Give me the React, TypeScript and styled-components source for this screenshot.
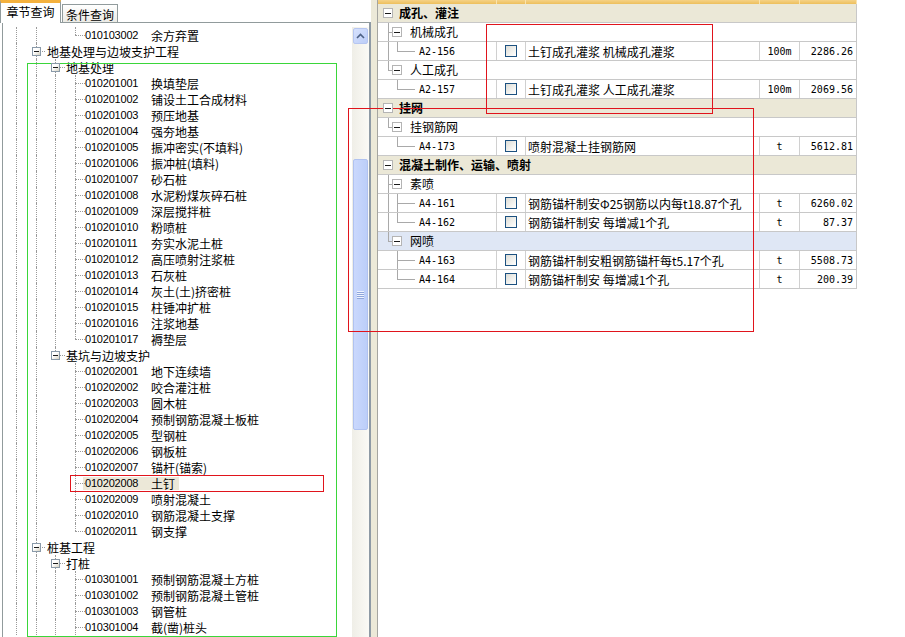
import React from 'react';
import styled, { createGlobalStyle } from 'styled-components';

const GlobalStyle = createGlobalStyle`
  html, body {
    margin: 0;
    padding: 0;
    background: #ffffff;
  }
  body {
    font-family: "Noto Sans CJK SC", "Liberation Sans", sans-serif;
    font-size: 12px;
    color: #000;
    overflow: hidden;
  }
`;

type TreeItem = { depth: number; name: string; code?: string; selected?: boolean };

const leftRows: TreeItem[] = [
  { depth: 3, code: '010103002', name: '余方弃置' },
  { depth: 1, name: '地基处理与边坡支护工程' },
  { depth: 2, name: '地基处理' },
  { depth: 3, code: '010201001', name: '换填垫层' },
  { depth: 3, code: '010201002', name: '铺设土工合成材料' },
  { depth: 3, code: '010201003', name: '预压地基' },
  { depth: 3, code: '010201004', name: '强夯地基' },
  { depth: 3, code: '010201005', name: '振冲密实(不填料)' },
  { depth: 3, code: '010201006', name: '振冲桩(填料)' },
  { depth: 3, code: '010201007', name: '砂石桩' },
  { depth: 3, code: '010201008', name: '水泥粉煤灰碎石桩' },
  { depth: 3, code: '010201009', name: '深层搅拌桩' },
  { depth: 3, code: '010201010', name: '粉喷桩' },
  { depth: 3, code: '010201011', name: '夯实水泥土桩' },
  { depth: 3, code: '010201012', name: '高压喷射注浆桩' },
  { depth: 3, code: '010201013', name: '石灰桩' },
  { depth: 3, code: '010201014', name: '灰土(土)挤密桩' },
  { depth: 3, code: '010201015', name: '柱锤冲扩桩' },
  { depth: 3, code: '010201016', name: '注浆地基' },
  { depth: 3, code: '010201017', name: '褥垫层' },
  { depth: 2, name: '基坑与边坡支护' },
  { depth: 3, code: '010202001', name: '地下连续墙' },
  { depth: 3, code: '010202002', name: '咬合灌注桩' },
  { depth: 3, code: '010202003', name: '圆木桩' },
  { depth: 3, code: '010202004', name: '预制钢筋混凝土板桩' },
  { depth: 3, code: '010202005', name: '型钢桩' },
  { depth: 3, code: '010202006', name: '钢板桩' },
  { depth: 3, code: '010202007', name: '锚杆(锚索)' },
  { depth: 3, code: '010202008', name: '土钉', selected: true },
  { depth: 3, code: '010202009', name: '喷射混凝土' },
  { depth: 3, code: '010202010', name: '钢筋混凝土支撑' },
  { depth: 3, code: '010202011', name: '钢支撑' },
  { depth: 1, name: '桩基工程' },
  { depth: 2, name: '打桩' },
  { depth: 3, code: '010301001', name: '预制钢筋混凝土方桩' },
  { depth: 3, code: '010301002', name: '预制钢筋混凝土管桩' },
  { depth: 3, code: '010301003', name: '钢管桩' },
  { depth: 3, code: '010301004', name: '截(凿)桩头' },
];

type GridRow =
  | { kind: 'group'; label: string }
  | { kind: 'sub'; label: string; more: boolean; selected?: boolean }
  | { kind: 'item'; code: string; desc: string; unit: string; price: string; subMore: boolean; more: boolean };

const gridRows: GridRow[] = [
  { kind: 'group', label: '成孔、灌注' },
  { kind: 'sub', label: '机械成孔', more: true },
  { kind: 'item', code: 'A2-156', desc: '土钉成孔灌浆 机械成孔灌浆', unit: '100m', price: '2286.26', subMore: true, more: false },
  { kind: 'sub', label: '人工成孔', more: false },
  { kind: 'item', code: 'A2-157', desc: '土钉成孔灌浆 人工成孔灌浆', unit: '100m', price: '2069.56', subMore: false, more: false },
  { kind: 'group', label: '挂网' },
  { kind: 'sub', label: '挂钢筋网', more: false },
  { kind: 'item', code: 'A4-173', desc: '喷射混凝土挂钢筋网', unit: 't', price: '5612.81', subMore: false, more: false },
  { kind: 'group', label: '混凝土制作、运输、喷射' },
  { kind: 'sub', label: '素喷', more: true },
  { kind: 'item', code: 'A4-161', desc: '钢筋锚杆制安Φ25钢筋以内每t18.87个孔', unit: 't', price: '6260.02', subMore: true, more: true },
  { kind: 'item', code: 'A4-162', desc: '钢筋锚杆制安 每增减1个孔', unit: 't', price: '87.37', subMore: true, more: false },
  { kind: 'sub', label: '网喷', more: false, selected: true },
  { kind: 'item', code: 'A4-163', desc: '钢筋锚杆制安粗钢筋锚杆每t5.17个孔', unit: 't', price: '5508.73', subMore: false, more: true },
  { kind: 'item', code: 'A4-164', desc: '钢筋锚杆制安 每增减1个孔', unit: 't', price: '200.39', subMore: false, more: false },
];

// indent columns of the left tree (x 6 / 26 / 45 / 65)
const indentWidths = [20, 19, 20, 20];
const COLS = { tree: 119, check: 29, desc: 234, unit: 40, price: 57 };

function hasNext(rows: { depth: number }[], i: number, k: number) {
  for (let j = i + 1; j < rows.length; j++) {
    if (rows[j].depth < k) return false;
    if (rows[j].depth === k) return true;
  }
  return true;
}

const Page = styled.div`
  position: relative;
  display: flex;
  width: 905px;
  height: 637px;
  overflow: hidden;
  background: #fff;
`;

/* ---------- left: tab control with tree ---------- */

const LeftPanel = styled.div`
  width: 371px;
  flex-shrink: 0;
  display: flex;
  flex-direction: column;
`;

const TabStrip = styled.div`
  height: 22px;
  display: flex;
  align-items: flex-end;
  position: relative;
  z-index: 1;
`;

const Tab = styled.div<{ $active?: boolean }>`
  box-sizing: border-box;
  display: flex;
  align-items: center;
  justify-content: center;
  white-space: nowrap;
  border: 1px solid #919b9c;
  border-bottom: none;
  ${(p) =>
    p.$active
      ? `
    width: 61px;
    height: 23px;
    margin-bottom: -1px;
    border-top: 3px solid #f4b13e;
    background: #fff;
    padding-bottom: 3px;
  `
      : `
    width: 56px;
    height: 18px;
    margin-left: 1px;
    background: linear-gradient(#ffffff, #ecebe5);
    padding-top: 1px;
  `}
`;

const TabBody = styled.div`
  flex: 1;
  margin-left: 2px;
  width: 369px;
  box-sizing: border-box;
  border: 1px solid #919b9c;
  border-right: 2px solid #8e9aa5;
  border-bottom: none;
  padding-top: 4px;
  display: flex;
  background: #fff;
  min-height: 0;
`;

const Tree = styled.div`
  flex: 1;
  padding-left: 3px;
  overflow: hidden;
`;

const TreeLine = styled.div`
  height: 16px;
  display: flex;
  align-items: center;
  white-space: nowrap;
`;

const Branch = styled.div<{ $w: number; $x: number; $up?: boolean; $down?: boolean; $across?: boolean; $dotted?: boolean }>`
  position: relative;
  flex-shrink: 0;
  width: ${(p) => p.$w}px;
  align-self: stretch;
  display: flex;
  align-items: center;
  &::before {
    content: '';
    display: ${(p) => (p.$up || p.$down ? 'block' : 'none')};
    position: absolute;
    left: ${(p) => p.$x}px;
    top: ${(p) => (p.$up ? '0' : '50%')};
    bottom: ${(p) => (p.$down ? '0' : '50%')};
    border-left: 1px ${(p) => (p.$dotted ? 'dotted #9a9a9a' : 'solid #a9a9a9')};
  }
  &::after {
    content: '';
    display: ${(p) => (p.$across ? 'block' : 'none')};
    position: absolute;
    left: ${(p) => p.$x}px;
    right: 0;
    top: 50%;
    border-top: 1px ${(p) => (p.$dotted ? 'dotted #9a9a9a' : 'solid #a9a9a9')};
  }
`;

const Expander = styled.span<{ $offset: number; $size: number; $flat?: boolean }>`
  position: relative;
  z-index: 1;
  box-sizing: border-box;
  margin-left: ${(p) => p.$offset}px;
  width: ${(p) => p.$size}px;
  height: ${(p) => p.$size}px;
  border: 1px solid ${(p) => (p.$flat ? '#b4b4b4' : '#8a9aa9')};
  background: ${(p) => (p.$flat ? '#fff' : 'linear-gradient(135deg, #ffffff 40%, #d6d2c2)')};
  display: flex;
  align-items: center;
  justify-content: center;
  flex-shrink: 0;
  &::before {
    content: '';
    width: ${(p) => (p.$flat ? 6 : 5)}px;
    height: 1px;
    background: #1a1a1a;
  }
`;

const NodeLabel = styled.span<{ $indent: number; $selected?: boolean }>`
  display: flex;
  align-items: center;
  height: 13px;
  line-height: 13px;
  margin-left: ${(p) => p.$indent}px;
  padding: 0 4px 0 2px;
  background: ${(p) => (p.$selected ? '#ece8d8' : 'transparent')};
`;

const NodeCode = styled.span`
  width: 66px;
  font-family: "Liberation Sans", Arial, sans-serif;
  font-size: 11px;
  letter-spacing: -0.2px;
`;

const ScrollBar = styled.div`
  width: 17px;
  flex-shrink: 0;
  display: flex;
  flex-direction: column;
  align-items: center;
  background: linear-gradient(to right, #efeee7, #fbfaf6);
`;

const ArrowButton = styled.div`
  box-sizing: border-box;
  margin-top: 1px;
  width: 15px;
  height: 16px;
  border: 1px solid #b6c6f1;
  border-radius: 2px;
  background: linear-gradient(135deg, #d7e2fd, #bccdf8);
  display: flex;
  align-items: center;
  justify-content: center;
`;

const TrackGap = styled.div`
  height: 115px;
  flex-shrink: 0;
`;

const Thumb = styled.div`
  box-sizing: border-box;
  width: 15px;
  height: 271px;
  border: 1px solid #b0c2f0;
  border-radius: 2px;
  background: linear-gradient(to right, #cad8fd, #bccef9);
  display: flex;
  align-items: center;
  justify-content: center;
`;

const Grip = styled.div`
  width: 7px;
  height: 8px;
  background: repeating-linear-gradient(#eef3ff 0 1px, #8fa6db 1px 2px);
`;

const Splitter = styled.div`
  width: 7px;
  flex-shrink: 0;
  box-sizing: border-box;
  background: #ece9d8;
  border-right: 1px solid #a5a5a0;
`;

/* ---------- right: quota grid ---------- */

const RightPanel = styled.div`
  flex: 1;
  display: flex;
  flex-direction: column;
  background: #fff;
`;

const HeadStrip = styled.div`
  display: flex;
  height: 4px;
  width: 479px;
`;

const HeadCell = styled.div<{ $w: number }>`
  box-sizing: border-box;
  width: ${(p) => p.$w}px;
  background: linear-gradient(#f5d287, #edbf5c);
  border-right: 1px solid #fae3ad;
`;

const GridLine = styled.div<{ $tone?: 'group' | 'selected' }>`
  box-sizing: border-box;
  display: flex;
  width: 479px;
  height: 19px;
  border-bottom: 1px solid #c8c8c8;
  border-right: 1px solid #c8c8c8;
  background: ${(p) => (p.$tone === 'group' ? '#ebe8d7' : p.$tone === 'selected' ? '#dfe7f5' : '#fff')};
`;

const TreeCell = styled.div<{ $full?: boolean }>`
  box-sizing: border-box;
  width: ${(p) => (p.$full ? 'auto' : `${COLS.tree}px`)};
  flex: ${(p) => (p.$full ? '1' : '0 0 auto')};
  padding-left: 5px;
  display: flex;
  align-items: center;
  white-space: nowrap;
  ${(p) => (p.$full ? '' : 'border-right: 1px solid #d0d0d0;')}
`;

const GroupText = styled.span`
  margin-left: 6px;
  font-weight: bold;
  line-height: 18px;
`;

const SubText = styled.span`
  margin-left: 8px;
  line-height: 18px;
`;

const GridCode = styled.span`
  margin-left: 4px;
  font-family: "DejaVu Sans Mono", "Liberation Mono", monospace;
  font-size: 10px;
`;

const Cell = styled.div<{ $w: number; $align?: 'left' | 'center' | 'right'; $last?: boolean }>`
  box-sizing: border-box;
  width: ${(p) => p.$w}px;
  flex-shrink: 0;
  display: flex;
  align-items: center;
  justify-content: ${(p) => (p.$align === 'center' ? 'center' : p.$align === 'right' ? 'flex-end' : 'flex-start')};
  padding: ${(p) => (p.$align === 'right' ? '0 3px 0 0' : p.$align === 'left' ? '0 0 0 2px' : '0')};
  white-space: nowrap;
  overflow: hidden;
  ${(p) => (p.$last ? '' : 'border-right: 1px solid #d0d0d0;')}
`;

const Num = styled.span`
  font-family: "DejaVu Sans Mono", "Liberation Mono", monospace;
  font-size: 10px;
`;

const CheckBox = styled.span`
  box-sizing: border-box;
  width: 12px;
  height: 12px;
  border: 1px solid #1c5180;
  background: linear-gradient(135deg, #dcdcd6, #f6f6f3 70%, #ffffff);
`;

/* ---------- annotation marks drawn over the screenshot ---------- */

const Mark = styled.div<{ $x: number; $y: number; $w: number; $h: number; $color: string }>`
  position: absolute;
  left: ${(p) => p.$x}px;
  top: ${(p) => p.$y}px;
  width: ${(p) => p.$w}px;
  height: ${(p) => p.$h}px;
  box-sizing: border-box;
  border: 1px solid ${(p) => p.$color};
  pointer-events: none;
`;

function LeftTreeRow({ i }: { i: number }) {
  const row = leftRows[i];
  const guides = [];
  for (let k = 0; k < row.depth; k++) {
    const on = hasNext(leftRows, i, k);
    guides.push(<Branch key={k} $w={indentWidths[k]} $x={10} $dotted $up={on} $down={on} />);
  }
  return (
    <TreeLine>
      {guides}
      <Branch $w={indentWidths[row.depth]} $x={10} $dotted $up $down={hasNext(leftRows, i, row.depth)} $across>
        {!row.code && <Expander $offset={6} $size={9} />}
      </Branch>
      {row.code ? (
        <NodeLabel $indent={-2} $selected={row.selected}>
          <NodeCode>{row.code}</NodeCode>
          {row.name}
        </NodeLabel>
      ) : (
        <NodeLabel $indent={row.depth === 1 ? 0 : -1}>{row.name}</NodeLabel>
      )}
    </TreeLine>
  );
}

function QuotaRow({ row }: { row: GridRow }) {
  if (row.kind === 'group') {
    return (
      <GridLine $tone="group">
        <TreeCell $full>
          <Expander $offset={0} $size={10} $flat />
          <GroupText>{row.label}</GroupText>
        </TreeCell>
      </GridLine>
    );
  }
  if (row.kind === 'sub') {
    return (
      <GridLine $tone={row.selected ? 'selected' : undefined}>
        <TreeCell $full>
          <Branch $w={9} $x={5} $up $down={row.more} $across />
          <Expander $offset={0} $size={10} $flat />
          <SubText>{row.label}</SubText>
        </TreeCell>
      </GridLine>
    );
  }
  return (
    <GridLine>
      <TreeCell>
        <Branch $w={9} $x={5} $up={row.subMore} $down={row.subMore} />
        <Branch $w={23} $x={5} $up $down={row.more} $across />
        <GridCode>{row.code}</GridCode>
      </TreeCell>
      <Cell $w={COLS.check} $align="center">
        <CheckBox />
      </Cell>
      <Cell $w={COLS.desc} $align="left">
        {row.desc}
      </Cell>
      <Cell $w={COLS.unit} $align="center">
        <Num>{row.unit}</Num>
      </Cell>
      <Cell $w={COLS.price - 1} $align="right" $last>
        <Num>{row.price}</Num>
      </Cell>
    </GridLine>
  );
}

export default function App() {
  return (
    <>
      <GlobalStyle />
      <Page>
        <LeftPanel>
          <TabStrip>
            <Tab $active>章节查询</Tab>
            <Tab>条件查询</Tab>
          </TabStrip>
          <TabBody>
            <Tree>
              {leftRows.map((_, i) => (
                <LeftTreeRow key={i} i={i} />
              ))}
            </Tree>
            <ScrollBar>
              <ArrowButton>
                <svg width="9" height="6" viewBox="0 0 9 6">
                  <polyline points="1,5 4.5,1.5 8,5" fill="none" stroke="#4d6185" strokeWidth="1.6" />
                </svg>
              </ArrowButton>
              <TrackGap />
              <Thumb>
                <Grip />
              </Thumb>
            </ScrollBar>
          </TabBody>
        </LeftPanel>
        <Splitter />
        <RightPanel>
          <HeadStrip>
            <HeadCell $w={COLS.tree} />
            <HeadCell $w={COLS.check} />
            <HeadCell $w={COLS.desc} />
            <HeadCell $w={COLS.unit} />
            <HeadCell $w={COLS.price} />
          </HeadStrip>
          {gridRows.map((row, i) => (
            <QuotaRow key={i} row={row} />
          ))}
        </RightPanel>

        <Mark $x={27} $y={63} $w={310} $h={574} $color="#3ad63a" />
        <Mark $x={70} $y={475} $w={254} $h={17} $color="#e0141c" />
        <Mark $x={486} $y={24} $w={227} $h={90} $color="#e0141c" />
        <Mark $x={348} $y={108} $w={406} $h={224} $color="#e0141c" />
      </Page>
    </>
  );
}
